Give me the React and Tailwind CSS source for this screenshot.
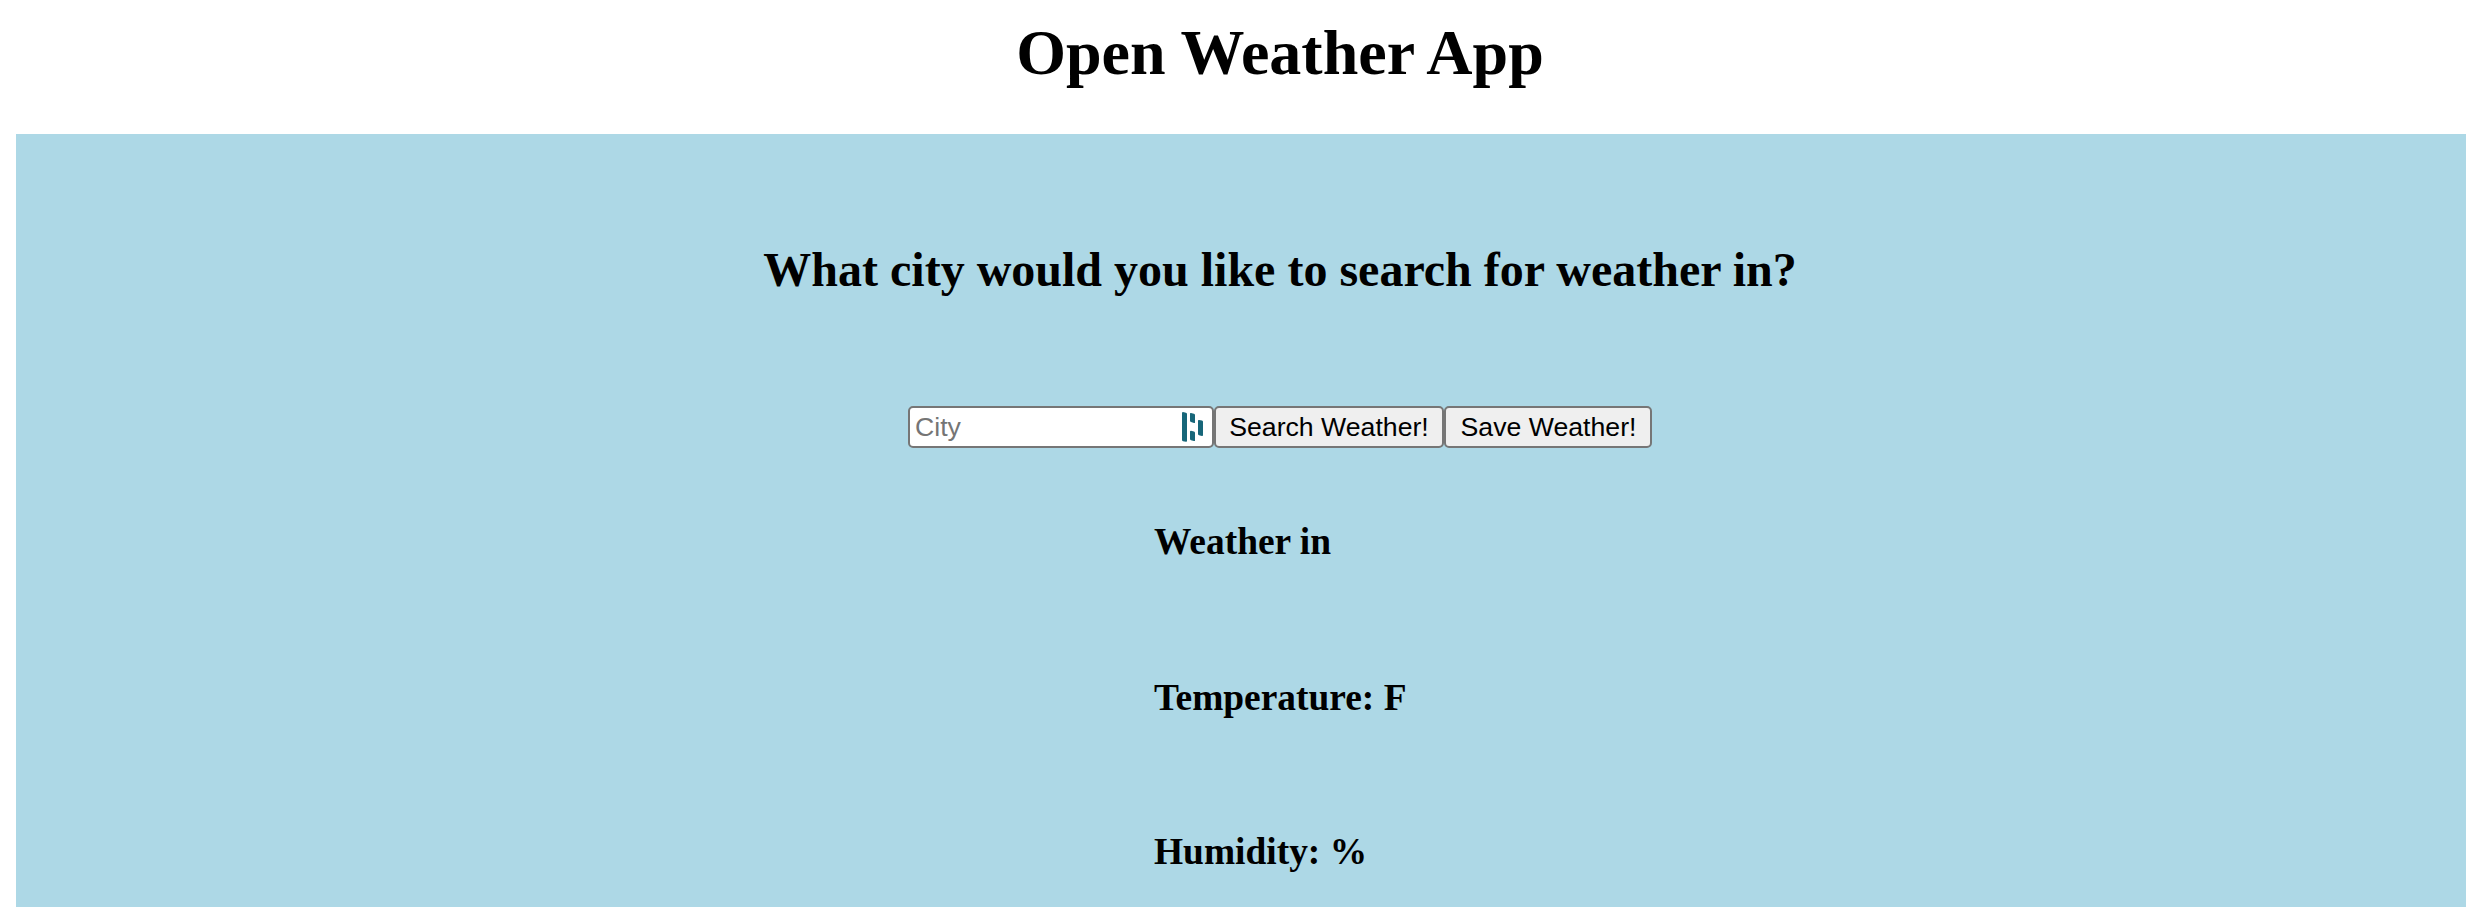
function AutofillIcon() {
  return (
    <svg
      className="h-[30px] w-[21px] shrink-0"
      viewBox="0 0 21 30"
      fill="#176679"
      aria-hidden="true"
    >
      <path d="M0 1Q0 0 1 0L4 .8Q5 1 5 2V29Q5 30 4 29.8L1 29.2Q0 29 0 28Z" />
      <path d="M8 1.6Q8 .8 9 1L12 1.8Q13 2 13 3V10.5Q13 11.3 12 11L9 10Q8 9.700 8 9Z" />
      <path d="M8 19.500Q8 18.700 9 18.700L12 19.600Q13 20 13 21V28.500Q13 29.300 12 29L9 28.300Q8 28 8 27Z" />
      <path d="M16 8.800Q16 7.800 17 8L20 8.600Q21 8.800 21 9.800V23Q21 24.200 20 24L17 23.300Q16 23 16 22Z" />
    </svg>
  );
}

function Button({ className, children }) {
  return (
    <button
      type="button"
      className={`h-[42px] rounded-[5px] border-2 border-[#767676] bg-[#efefef] text-center whitespace-nowrap ${className}`}
    >
      {children}
    </button>
  );
}

export default function App() {
  return (
    <div className="h-[907px] w-full overflow-hidden bg-white pl-4 font-['Liberation_Serif',serif] font-bold text-black">
      <div className="w-[2528px]">
        <h1 className="pt-[17px] pb-[45px] text-center text-[64px] leading-[72px]">
          Open Weather App
        </h1>
        <main className="flex h-[773px] flex-col items-center bg-[#add8e6] pt-[108px]">
          <h2 className="text-5xl leading-[56px]">
            What city would you like to search for weather in?
          </h2>
          <form className="mt-[108px] flex font-['Liberation_Sans',Arial,sans-serif] text-[26.667px] leading-[30px] font-normal">
            <div className="flex h-[42px] w-[306px] items-center rounded-[5px] border-2 border-[#767676] bg-white pr-[9px] pl-[5px]">
              <input
                type="text"
                placeholder="City"
                className="min-w-0 flex-1 outline-none placeholder:text-[#757575]"
              />
              <AutofillIcon />
            </div>
            <Button className="w-[230px]">Search Weather!</Button>
            <Button className="w-[208px] pl-px">Save Weather!</Button>
          </form>
          <section className="mt-[72px] w-[252px] text-[37.44px] leading-[44px] whitespace-nowrap">
            <h3>Weather in</h3>
            <h3 className="mt-28">Temperature: F</h3>
            <h3 className="mt-[110px]">Humidity: %</h3>
          </section>
        </main>
      </div>
    </div>
  );
}
